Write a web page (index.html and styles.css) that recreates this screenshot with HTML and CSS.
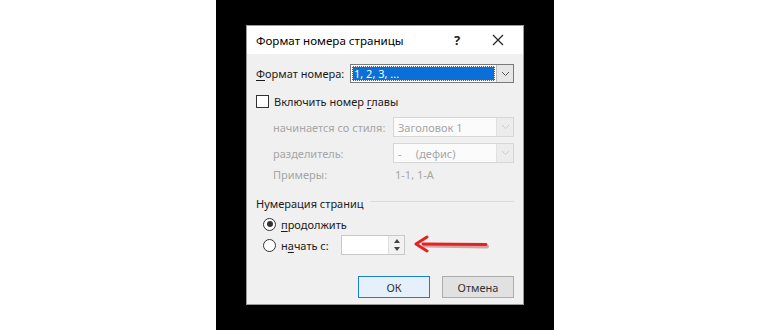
FILE: index.html
```html
<!DOCTYPE html>
<html lang="ru">
<head>
    <meta charset="UTF-8">
    <title>Формат номера страницы</title>
    <link rel="stylesheet" href="styles.css">
</head>
<body>

<div class="panel">
    <div class="dialog">
        <div class="titlebar">
            <span class="title">Формат номера страницы</span>
            <span class="help">?</span>
            <span class="close">
                <svg width="12" height="12" viewBox="0 0 12 12"><path d="M1 1 L11 11 M11 1 L1 11" stroke="#222" stroke-width="1.2" fill="none"/></svg>
            </span>
        </div>

        <div class="body">
            <div class="row row-format">
                <span class="label"><u>Ф</u>ормат номера:</span>
                <div class="select active">
                    <span class="value"><span class="picked">1, 2, 3, ...</span></span>
                    <span class="arrow">
                        <svg width="9" height="6" viewBox="0 0 9 6"><path d="M1 1 L4.5 4.5 L8 1" stroke="#555" fill="none"/></svg>
                    </span>
                </div>
            </div>

            <div class="row row-check">
                <span class="checkbox"></span>
                <span>Включить номер <u>г</u>лавы</span>
            </div>

            <div class="row row-sub first">
                <span class="label sub">начинается со стиля:</span>
                <div class="select off">
                    <span class="value">Заголовок 1</span>
                    <span class="arrow">
                        <svg width="9" height="6" viewBox="0 0 9 6"><path d="M1 1 L4.5 4.5 L8 1" stroke="#ccc" fill="none"/></svg>
                    </span>
                </div>
            </div>

            <div class="row row-sub">
                <span class="label sub">разделитель:</span>
                <div class="select off">
                    <span class="value">-&nbsp;&nbsp;&nbsp;&nbsp;&nbsp;(дефис)</span>
                    <span class="arrow">
                        <svg width="9" height="6" viewBox="0 0 9 6"><path d="M1 1 L4.5 4.5 L8 1" stroke="#ccc" fill="none"/></svg>
                    </span>
                </div>
            </div>

            <div class="row row-example">
                <span class="label sub">Примеры:</span>
                <span class="example">1-1, 1-A</span>
            </div>

            <div class="row group">
                <span>Нумерация страниц</span>
                <span class="rule"></span>
            </div>

            <div class="row row-radio">
                <span class="radio checked"></span>
                <span><u>п</u>родолжить</span>
            </div>

            <div class="row row-radio start">
                <span class="radio"></span>
                <span class="start-label">н<u>а</u>чать с:</span>
                <div class="spin">
                    <span class="spin-field"></span>
                    <span class="spin-btns">
                        <svg width="6" height="4" viewBox="0 0 6 4"><path d="M0 4 L3 0 L6 4 Z" fill="#444"/></svg>
                        <svg width="6" height="4" viewBox="0 0 6 4"><path d="M0 0 L3 4 L6 0 Z" fill="#444"/></svg>
                    </span>
                </div>
                <svg class="pointer" width="76" height="20" viewBox="0 0 76 20">
                    <path d="M74 10 L12 9" stroke="#a01818" stroke-width="4" stroke-linecap="round" fill="none" opacity="0.35" transform="translate(0 1.5)"/>
                    <path d="M73 9.5 L10 9" stroke="#e02424" stroke-width="3" stroke-linecap="round" fill="none"/>
                    <path d="M14 2 L3 9 L14 16" stroke="#e02424" stroke-width="3" stroke-linecap="round" stroke-linejoin="round" fill="none"/>
                </svg>
            </div>

            <div class="buttons">
                <span class="btn default">ОК</span>
                <span class="btn">Отмена</span>
            </div>
        </div>
    </div>
</div>

</body>
</html>
```

FILE: styles.css
```css
body { margin: 0; background: #fff; font-family: "Noto Sans", "Open Sans", sans-serif; font-size: 11px; color: #1a1a1a; white-space: nowrap; }
u { text-decoration-thickness: 1px; text-underline-offset: 2px; }

.panel { width: 338px; height: 330px; margin: 0 auto; background: #000; display: flex; align-items: center; justify-content: center; }
.dialog { width: 276px; height: 278px; background: #f0f0f0; border: 1px solid #9a9a9a; display: flex; flex-direction: column; }

.titlebar { height: 28px; background: #fff; display: flex; align-items: center; padding-left: 9px; }
.title { font-size: 11.6px; color: #000; flex: 1; }
.help { width: 38px; font-size: 13px; font-weight: bold; color: #222; }
.close { width: 31px; display: flex; }

.body { flex: 1; padding: 0 9px 0 9px; display: flex; flex-direction: column; }
.row { display: flex; align-items: center; }

.row-format { margin-top: 10px; height: 19px; }
.label { width: 94px; flex-shrink: 0; }
.select { display: flex; height: 100%; box-sizing: border-box; border: 1px solid #7a7a7a; background: #fff; flex-shrink: 0; }
.select .value { flex: 1; display: flex; align-items: center; padding: 1px; }
.select .arrow { width: 16px; display: flex; align-items: center; justify-content: center; background: #e6e6e6; border-left: 1px solid #bbb; }
.active { width: 164px; }
.picked { display: block; width: 100%; height: 100%; background: #0a6fd8; color: #fff; padding-left: 2px; outline: 1px dotted #fff; outline-offset: -1px; line-height: 15px; }

.row-check { margin-top: 11px; height: 14px; }
.checkbox { width: 11px; height: 11px; border: 1px solid #333; background: #fff; margin-right: 5px; }

.row-sub { margin-top: 6px; height: 20px; padding-left: 17px; }
.row-sub.first { margin-top: 9px; }
.label.sub { width: 120px; color: #a6a6a6; overflow: visible; }
.off { width: 121px; border-color: #d6d6d6; background: #fbfbfb; color: #a6a6a6; }
.off .value { padding-left: 4px; }
.off .arrow { background: #ececec; border-left: 1px solid #e0e0e0; }

.row-example { margin-top: 4px; height: 14px; padding-left: 17px; }
.example { color: #a6a6a6; padding-left: 2px; }

.group { margin-top: 15px; height: 14px; color: #1a1a1a; }
.rule { flex: 1; height: 1px; background: #dcdcdc; margin-left: 6px; margin-top: -3px; }

.row-radio { margin-top: 7px; height: 14px; padding-left: 7px; }
.radio { width: 11px; height: 11px; border: 1px solid #333; border-radius: 50%; background: #fff; margin-right: 5px; position: relative; }
.radio.checked::after { content: ""; position: absolute; left: 2.5px; top: 2.5px; width: 6px; height: 6px; border-radius: 50%; background: #333; }

.row-radio.start { margin-top: 4px; height: 20px; }
.start-label { width: 60px; }
.spin { width: 64px; height: 20px; box-sizing: border-box; border: 1px solid #c8c8c8; background: #fff; display: flex; }
.spin-field { flex: 1; }
.spin-btns { width: 15px; display: flex; flex-direction: column; align-items: center; justify-content: space-evenly; background: #f2f2f2; border-left: 1px solid #e0e0e0; }
.pointer { margin-left: 8px; }

.buttons { margin-top: 21px; display: flex; justify-content: flex-end; gap: 12px; }
.btn { width: 72px; height: 22px; box-sizing: border-box; border: 1px solid #adadad; background: #e1e1e1; display: flex; align-items: center; justify-content: center; color: #333; }
.btn.default { border: 1px solid #1a7fd4; background: #e5f0fa; }
```
